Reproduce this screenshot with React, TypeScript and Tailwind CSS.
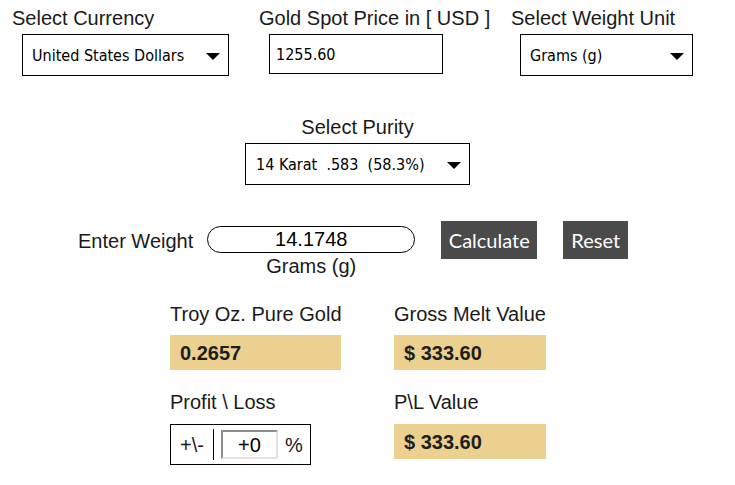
import React from "react";

const Caret = () => (
  <svg width="14" height="7" viewBox="0 0 14 7" className="shrink-0">
    <path d="M0 0 L14 0 L7 7 Z" fill="#000" />
  </svg>
);

type FakeSelectProps = {
  value: string;
  className: string;
};

// looks like the native select box in the screenshot
const FakeSelect = ({ value, className }: FakeSelectProps) => (
  <div
    className={`flex items-center justify-between border border-black bg-white pr-[8px] pt-[2px] font-['DejaVu_Sans_Condensed','Liberation_Sans',sans-serif] text-[16px] text-black ${className}`}
  >
    <span className="whitespace-pre">{value}</span>
    <Caret />
  </div>
);

const GoldBox = ({ value }: { value: string }) => (
  <div className="mt-[9px] flex h-[35px] items-center bg-[#ebd08f] pl-[10px] text-[20px] font-bold text-[#1e1e1e]">
    {value}
  </div>
);

const App = () => {
  return (
    <div className="h-[485px] w-[735px] bg-white font-['Liberation_Sans',Arial,sans-serif] text-[#1a1a1a]">
      {/* top row */}
      <div className="flex pt-[6px]">
        <div className="w-[259px] pl-[12px]">
          <div className="text-[20px] leading-[24px]">Select Currency</div>
          <FakeSelect
            value="United States Dollars"
            className="ml-[10px] mt-[4px] h-[42px] w-[207px] pl-[9px]"
          />
        </div>
        <div className="w-[252px]">
          <div className="whitespace-nowrap text-[20px] leading-[24px]">Gold Spot Price in [ USD ]</div>
          <input
            defaultValue="1255.60"
            className="ml-[10px] mt-[4px] h-[40px] w-[174px] border border-black pl-[6px] font-['DejaVu_Sans_Condensed','Liberation_Sans',sans-serif] text-[16px] text-black outline-none"
          />
        </div>
        <div>
          <div className="text-[20px] leading-[24px]">Select Weight Unit</div>
          <FakeSelect
            value="Grams (g)"
            className="ml-[9px] mt-[4px] h-[42px] w-[173px] pl-[9px]"
          />
        </div>
      </div>

      {/* purity */}
      <div className="ml-[245px] mt-[39px] w-[225px]">
        <div className="text-center text-[20px] leading-[24px]">Select Purity</div>
        <FakeSelect
          value="14 Karat  .583  (58.3%)"
          className="mt-[4px] h-[42px] w-[225px] pl-[10px]"
        />
      </div>

      {/* weight entry */}
      <div className="ml-[78px] mt-[36px] flex items-start">
        <div className="mt-[8px] text-[20px] leading-[24px]">Enter Weight</div>
        <div className="ml-[14px] mt-[5px] flex w-[208px] flex-col items-center">
          <input
            defaultValue="14.1748"
            className="h-[27px] w-[208px] rounded-full border border-black text-center text-[20px] leading-[25px] text-black outline-none"
          />
          <div className="mt-[1px] text-[20px] leading-[24px]">Grams (g)</div>
        </div>
        <button className="ml-[26px] flex h-[38px] w-[96px] items-center justify-center bg-[#4a4a4a] font-['Lato',sans-serif] text-[20px] text-white">
          Calculate
        </button>
        <button className="ml-[26px] flex h-[38px] w-[65px] items-center justify-center bg-[#4a4a4a] font-['Lato',sans-serif] text-[20px] text-white">
          Reset
        </button>
      </div>

      {/* results */}
      <div className="ml-[170px] mt-[24px] flex">
        <div className="w-[224px]">
          <div className="w-[171px]">
            <div className="whitespace-nowrap text-[20px] leading-[24px]">Troy Oz. Pure Gold</div>
            <GoldBox value="0.2657" />
          </div>
          <div className="mt-[20px] text-[20px] leading-[24px]">Profit \ Loss</div>
          <div className="mt-[10px] flex h-[41px] w-[141px] items-center border border-black pl-[9px]">
            <span className="text-[20px] leading-[24px]">+\-</span>
            <div className="ml-[9px] h-[31px] w-px bg-black" />
            <input
              defaultValue="+0"
              className="ml-[7px] h-[29px] w-[57px] border-2 border-b-[#e2e2e2] border-l-[#8c8c8c] border-r-[#e2e2e2] border-t-[#8c8c8c] text-center text-[20px] text-black outline-none"
            />
            <span className="ml-[7px] text-[20px] leading-[24px]">%</span>
          </div>
        </div>
        <div className="w-[152px]">
          <div className="whitespace-nowrap text-[20px] leading-[24px]">Gross Melt Value</div>
          <GoldBox value="$ 333.60" />
          <div className="mt-[20px] text-[20px] leading-[24px]">P\L Value</div>
          <div className="mt-[10px] flex h-[35px] items-center bg-[#ebd08f] pl-[10px] text-[20px] font-bold text-[#1e1e1e]">
            $ 333.60
          </div>
        </div>
      </div>
    </div>
  );
};

export default App;
